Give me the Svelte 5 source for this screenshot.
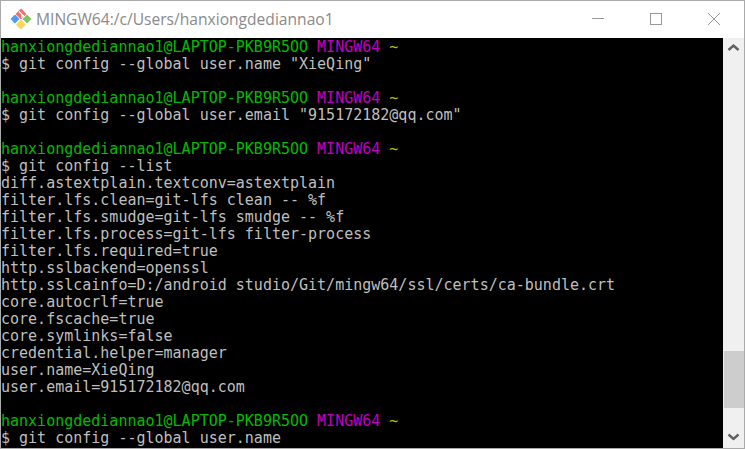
<script>
  const p = { k: 'p' };
  const lines = [
    p, '$ git config --global user.name "XieQing"', '',
    p, '$ git config --global user.email "915172182@qq.com"', '',
    p, '$ git config --list',
    'diff.astextplain.textconv=astextplain',
    'filter.lfs.clean=git-lfs clean -- %f',
    'filter.lfs.smudge=git-lfs smudge -- %f',
    'filter.lfs.process=git-lfs filter-process',
    'filter.lfs.required=true',
    'http.sslbackend=openssl',
    'http.sslcainfo=D:/android studio/Git/mingw64/ssl/certs/ca-bundle.crt',
    'core.autocrlf=true',
    'core.fscache=true',
    'core.symlinks=false',
    'credential.helper=manager',
    'user.name=XieQing',
    'user.email=915172182@qq.com',
    '',
    p, '$ git config --global user.name'
  ];
</script>

<div class="window">
  <header class="titlebar">
    <svg class="logo" width="24" height="22" viewBox="0 0 24 22" aria-hidden="true">
      <g stroke-linejoin="round" stroke-width="1.5">
        <path d="M12 1.5 L16.5 6 L12 10.5 L7.5 6Z" fill="#ee6f6f" stroke="#ee6f6f"/>
        <path d="M6 7.5 L9.5 11 L6 14.5 L2.5 11Z" fill="#4f9bf2" stroke="#4f9bf2"/>
        <path d="M18 7.5 L21.5 11 L18 14.5 L14.5 11Z" fill="#7cc562" stroke="#7cc562"/>
        <path d="M12 12.5 L16 16.5 L12 20.5 L8 16.5Z" fill="#f7d65c" stroke="#f7d65c"/>
      </g>
      <path d="M10 3.5L15.5 9M13 6.5V10" stroke="#fff" stroke-width="1.2" fill="none"/>
      <path d="M14 12.5L16 14.5" stroke="#fff" stroke-width="1.2" fill="none"/>
    </svg>
    <span class="title">MINGW64:/c/Users/hanxiongdediannao1</span>
    <div class="controls">
      <svg width="14" height="14" viewBox="0 0 14 14"><path d="M1 6.5H13" stroke="#999" fill="none"/></svg>
      <svg width="14" height="14" viewBox="0 0 14 14"><rect x="1.5" y="1.5" width="11" height="11" stroke="#999" fill="none"/></svg>
      <svg width="14" height="14" viewBox="0 0 14 14"><path d="M1 1L13 13M13 1L1 13" stroke="#999" fill="none"/></svg>
    </div>
  </header>
  <div class="body">
    <div class="term">
      {#each lines as l}
        {#if l === p}
          <div class="row"><span class="green">hanxiongdediannao1@LAPTOP-PKB9R5OO</span> <span class="magenta">MINGW64</span> <span class="yellow">~</span></div>
        {:else}
          <div class="row">{l}</div>
        {/if}
      {/each}
    </div>
    <div class="scrollbar">
      <svg width="17" height="17" viewBox="0 0 17 17"><path d="M3.5 12L8.5 7.5L13.5 12" stroke="#606060" stroke-width="2.4" fill="none"/></svg>
      <div class="track"><div class="thumb"></div></div>
      <svg width="17" height="17" viewBox="0 0 17 17"><path d="M3.5 3.5L8.5 8L13.5 3.5" stroke="#606060" stroke-width="2.4" fill="none"/></svg>
    </div>
  </div>
</div>

<style>
  :global(body) { margin: 0; background: #fff; overflow: hidden; }
  .window {
    width: 745px; height: 449px; box-sizing: border-box;
    border: 1px solid #aaa;
    display: flex; flex-direction: column; background: #fff;
  }
  .titlebar { height: 37px; display: flex; align-items: center; flex: none; padding-bottom: 2px; box-sizing: border-box; }
  .logo { margin-left: 8px; margin-right: 3px; }
  .title { font: 15.6px "Open Sans", "Noto Sans", sans-serif; color: #8a8a8a; }
  .controls { margin-left: auto; display: flex; gap: 44px; margin-right: 23px; }
  .controls svg { display: block; }
  .body { flex: 1; display: flex; min-height: 0; background: #000; }
  .term {
    flex: 1; min-width: 0; overflow: hidden; padding-top: 1px;
    font: 15px/17px "DejaVu Sans Mono", monospace; color: #bfbfbf; white-space: pre;
  }
  .row { height: 17px; }
  .green { color: #00bb00; }
  .magenta { color: #c000c0; }
  .yellow { color: #bfbf00; }
  .scrollbar { width: 21px; flex: none; background: #f0f0f0; display: flex; flex-direction: column; align-items: center; }
  .scrollbar svg { flex: none; }
  .track { flex: 1; width: 100%; position: relative; }
  .thumb { position: absolute; left: 1px; right: 0; bottom: 23px; height: 57px; background: #cdcdcd; }
</style>
